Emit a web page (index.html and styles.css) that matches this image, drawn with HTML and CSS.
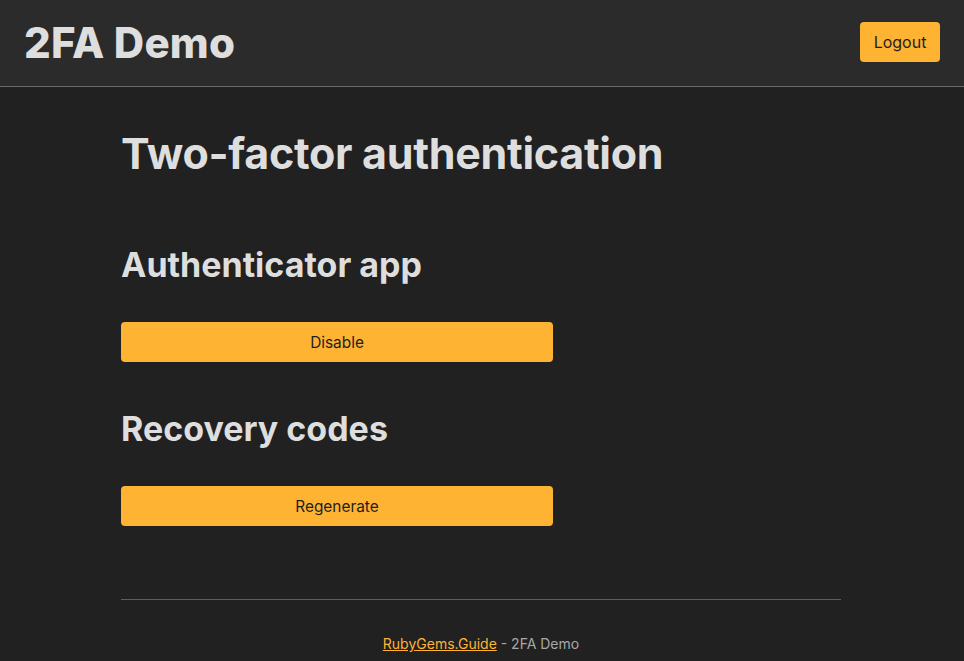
FILE: index.html
```html
<!DOCTYPE html>
<html>
<head>
<meta charset="utf-8">
<link rel="stylesheet" href="styles.css">
</head>
<body>
<header class="topbar">
  <div class="brand">2FA Demo</div>
  <button class="btn btn-small">Logout</button>
</header>
<main class="content">
  <h1 class="title">Two-factor authentication</h1>
  <section class="block">
    <h2 class="subtitle">Authenticator app</h2>
    <button class="btn btn-wide">Disable</button>
  </section>
  <section class="block">
    <h2 class="subtitle">Recovery codes</h2>
    <button class="btn btn-wide">Regenerate</button>
  </section>
  <hr class="rule">
  <footer class="footer"><a href="#" class="link">RubyGems.Guide</a> - 2FA Demo</footer>
</main>
</body>
</html>
```
FILE: styles.css
```css
html, body {
  margin: 0;
  padding: 0;
  background: #212121;
  font-family: Inter, "Noto Sans", sans-serif;
  color: #dedede;
}
.topbar {
  height: 84px;
  background: #2b2b2b;
  border-bottom: 1px solid #6a6a6a;
  display: flex;
  align-items: center;
  justify-content: space-between;
  padding: 0 24px 2px 24px;
  box-sizing: content-box;
}
.brand {
  font-size: 42px;
  font-weight: 800;
  letter-spacing: 0.2px;
  color: #dedede;
}
.btn {
  background: #ffb333;
  color: #1e1e1e;
  border: none;
  border-radius: 4px;
  font-family: Inter, "Noto Sans", sans-serif;
  font-size: 15.4px;
  cursor: pointer;
}
.btn-small {
  width: 80px;
  height: 40px;
  font-size: 16px;
}
.btn-wide {
  width: 432px;
  height: 40px;
  display: block;
}
.content {
  width: 720px;
  margin: 0 auto;
  padding-top: 40px;
  position: relative;
  left: -1px;
}
.title {
  margin: 0;
  font-size: 43px;
  font-weight: 700;
  line-height: 52px;
  letter-spacing: -0.3px;
}
.subtitle {
  margin: 0;
  font-size: 34px;
  font-weight: 700;
  line-height: 40px;
  letter-spacing: 0;
}
.block:first-of-type .subtitle { margin-top: 66px; }
.block + .block .subtitle { margin-top: 47px; }
.block .btn-wide { margin-top: 37px; }
.rule {
  border: none;
  border-top: 1px solid #5e5e5e;
  margin: 73px 0 0 0;
}
.footer {
  text-align: center;
  font-size: 14px;
  color: #a8a8a8;
  padding-top: 35px;
}
.link {
  color: #ffb333;
  text-decoration: underline;
}
```
